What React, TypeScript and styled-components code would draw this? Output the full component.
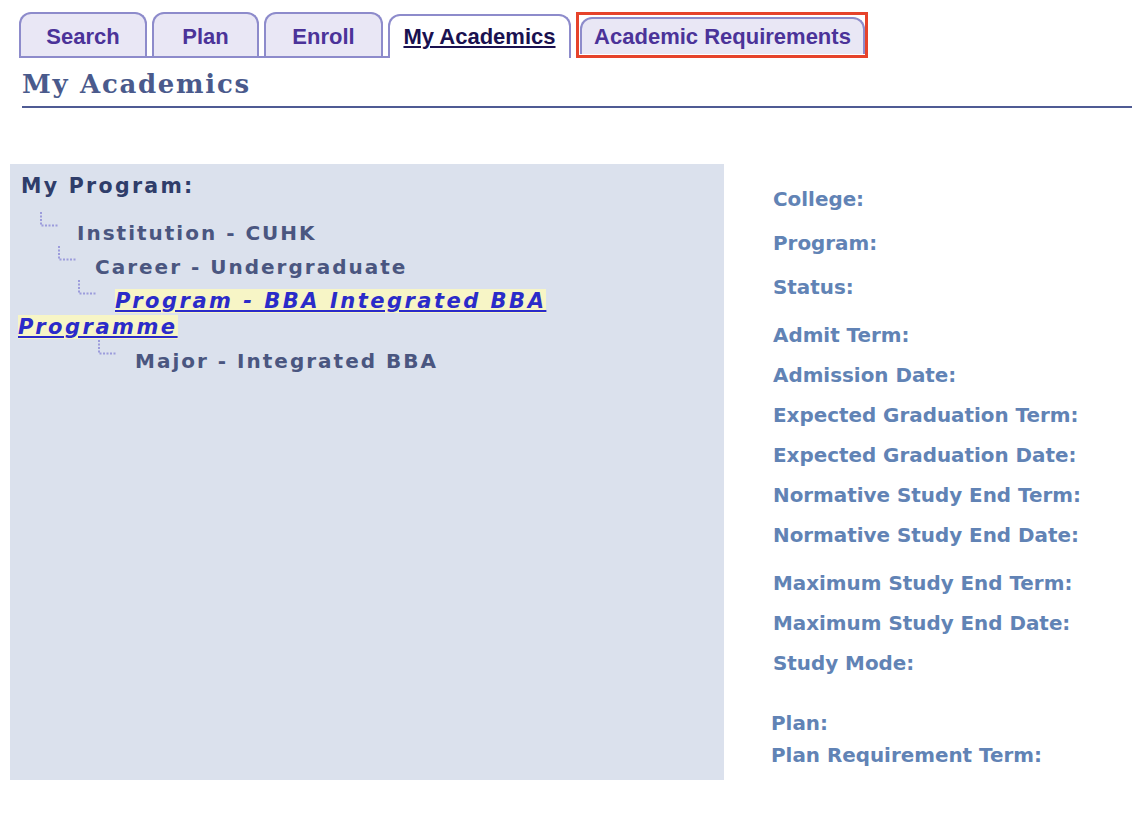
import React from "react";
import styled, { createGlobalStyle } from "styled-components";

const Global = createGlobalStyle`
  html, body { margin: 0; padding: 0; background: #ffffff; }
  body { font-family: "Liberation Sans", Arial, sans-serif; }
`;

const Page = styled.div`
  width: 1132px;
  min-height: 822px;
  padding-top: 12px;
  box-sizing: border-box;
`;

const TabBar = styled.div`
  display: flex;
  align-items: flex-end;
  padding-left: 19px;
  height: 46px;
`;

const TabSlot = styled.div<{ $active?: boolean }>`
  display: flex;
  align-items: flex-end;
  padding-right: 5px;
  border-bottom: 2px solid ${(p) => (p.$active ? "transparent" : "#8d8bcb")};
`;

const Tab = styled.div<{ $w: number; $active?: boolean; $h?: number; $pt?: number }>`
  width: ${(p) => p.$w}px;
  height: ${(p) => p.$h ?? 44}px;
  box-sizing: border-box;
  border: 2px solid #8d8bcb;
  border-bottom: none;
  border-radius: 12px 12px 0 0;
  background: ${(p) => (p.$active ? "#ffffff" : "#e9e7f5")};
  margin-bottom: ${(p) => (p.$active ? "-2px" : "0")};
  display: flex;
  align-items: center;
  justify-content: center;
  padding-top: ${(p) => p.$pt ?? 3}px;
  font-family: "Liberation Sans", Arial, sans-serif;
  font-weight: bold;
  font-size: 22px;
  color: ${(p) => (p.$active ? "#1a1150" : "#4b3399")};
  text-decoration: ${(p) => (p.$active ? "underline" : "none")};
  text-underline-offset: 2px;
  text-decoration-thickness: 2px;
`;

const RedFrame = styled.div`
  width: 292px;
  height: 46px;
  box-sizing: border-box;
  border: 3px solid #e6432b;
  display: flex;
  align-items: flex-start;
  padding: 2px 0 0 1px;
  margin-bottom: -2px;
`;

const Title = styled.h1`
  margin: 0 0 0 22px;
  padding: 10px 0 6px;
  font-family: "DejaVu Serif", Georgia, serif;
  font-weight: bold;
  font-size: 26px;
  letter-spacing: 1.7px;
  line-height: 32px;
  color: #4a5a8c;
  border-bottom: 2px solid #4f5b94;
`;

const Content = styled.div`
  display: flex;
  align-items: flex-start;
  margin-top: 56px;
  padding-left: 10px;
`;

const Panel = styled.div`
  width: 714px;
  height: 616px;
  box-sizing: border-box;
  background: #dbe1ed;
  padding: 9px 8px 0 8px;
`;

const PanelTitle = styled.div`
  margin-left: 3px;
  font-family: "DejaVu Sans", Verdana, sans-serif;
  font-weight: bold;
  font-size: 20.5px;
  letter-spacing: 2.3px;
  line-height: 26px;
  color: #2f3d6a;
  margin-bottom: 13px;
`;

const Tree = styled.div`
  width: 600px;
`;

const TreeRow = styled.div`
  font-family: "DejaVu Sans", Verdana, sans-serif;
  font-weight: bold;
  font-size: 20px;
  letter-spacing: 2px;
  line-height: 26px;
  color: #4a5680;
`;

const Spacer = styled.span<{ $w: number }>`
  display: inline-block;
  width: ${(p) => p.$w}px;
`;

const Connector = styled.svg`
  display: inline-block;
  width: 38px;
  height: 15px;
  vertical-align: 13px;
`;

const ProgramLink = styled.a`
  background: #f7f5c6;
  color: #2b2bc9;
  font-style: italic;
  font-size: 21px;
  letter-spacing: 2.5px;
  text-decoration: underline;
  text-decoration-thickness: 2px;
  text-underline-offset: 2px;
`;

const InfoColumn = styled.div`
  margin-left: 49px;
  padding-top: 24px;
  display: flex;
  flex-direction: column;
`;

const InfoLabel = styled.div<{ $gap: number; $shift?: number }>`
  margin-top: ${(p) => p.$gap}px;
  margin-left: ${(p) => p.$shift ?? 0}px;
  font-family: "DejaVu Sans", Verdana, sans-serif;
  font-weight: bold;
  font-size: 19.9px;
  line-height: 24px;
  color: #6183b5;
  white-space: nowrap;
`;

const TreeConnector = () => (
  <Connector viewBox="0 0 38 15">
    <path
      d="M2 0 V13.5 H19"
      fill="none"
      stroke="#9c9cdc"
      strokeWidth="2"
      strokeDasharray="2 1.5"
    />
  </Connector>
);

const tabs = [
  { label: "Search", w: 128 },
  { label: "Plan", w: 107 },
  { label: "Enroll", w: 119 },
  { label: "My Academics", w: 183, active: true },
];

const labels: { text: string; gap: number; shift?: number }[] = [
  { text: "College:", gap: 0 },
  { text: "Program:", gap: 20 },
  { text: "Status:", gap: 20 },
  { text: "Admit Term:", gap: 24 },
  { text: "Admission Date:", gap: 16 },
  { text: "Expected Graduation Term:", gap: 16 },
  { text: "Expected Graduation Date:", gap: 16 },
  { text: "Normative Study End Term:", gap: 16 },
  { text: "Normative Study End Date:", gap: 16 },
  { text: "Maximum Study End Term:", gap: 24 },
  { text: "Maximum Study End Date:", gap: 16 },
  { text: "Study Mode:", gap: 16 },
  { text: "Plan:", gap: 36, shift: -2 },
  { text: "Plan Requirement Term:", gap: 8, shift: -2 },
];

export default function App() {
  return (
    <Page>
      <Global />
      <TabBar>
        {tabs.map((t) => (
          <TabSlot key={t.label} $active={t.active}>
            <Tab $w={t.w} $active={t.active} $pt={t.active ? 0 : 3}>
              {t.label}
            </Tab>
          </TabSlot>
        ))}
        <TabSlot $active>
          <RedFrame>
            <Tab $w={285} $h={37} $pt={0}>
              Academic Requirements
            </Tab>
          </RedFrame>
        </TabSlot>
      </TabBar>
      <Title>My Academics</Title>
      <Content>
        <Panel>
          <PanelTitle>My Program:</PanelTitle>
          <Tree>
            <TreeRow>
              <Spacer $w={21} />
              <TreeConnector />
              Institution - CUHK
            </TreeRow>
            <TreeRow>
              <Spacer $w={39} />
              <TreeConnector />
              Career - Undergraduate
            </TreeRow>
            <TreeRow>
              <Spacer $w={59} />
              <TreeConnector />
              <ProgramLink href="#">Program - BBA Integrated BBA Programme</ProgramLink>
            </TreeRow>
            <TreeRow>
              <Spacer $w={79} />
              <TreeConnector />
              Major - Integrated BBA
            </TreeRow>
          </Tree>
        </Panel>
        <InfoColumn>
          {labels.map((l) => (
            <InfoLabel key={l.text} $gap={l.gap} $shift={l.shift}>
              {l.text}
            </InfoLabel>
          ))}
        </InfoColumn>
      </Content>
    </Page>
  );
}
